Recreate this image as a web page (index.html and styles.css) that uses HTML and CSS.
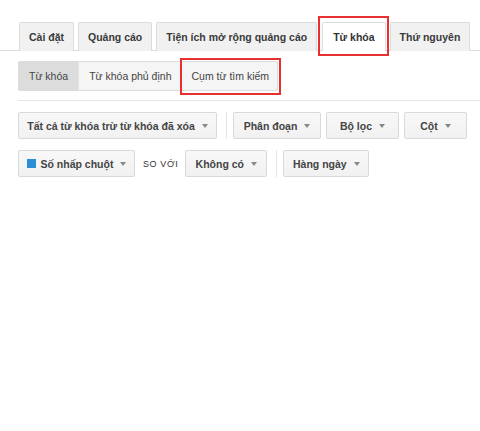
FILE: index.html
```html
<!DOCTYPE html>
<html lang="vi">
<head>
<meta charset="utf-8">
<link rel="stylesheet" href="styles.css">
</head>
<body>
<div class="tabs">
  <div class="tab">Cài đặt</div>
  <div class="tab">Quảng cáo</div>
  <div class="tab">Tiện ích mở rộng quảng cáo</div>
  <div class="tab active marked">Từ khóa</div>
  <div class="tab">Thứ nguyên</div>
</div>
<div class="content">
  <div class="subtabs">
    <div class="subtab selected">Từ khóa</div>
    <div class="subtab">Từ khóa phủ định</div>
    <div class="subtab last marked2">Cụm từ tìm kiếm</div>
  </div>
  <div class="rule"></div>
  <div class="toolbar">
    <div class="btn w-all">Tất cả từ khóa trừ từ khóa đã xóa <span class="caret"></span></div>
    <div class="vsep"></div>
    <div class="btn w-seg">Phân đoạn <span class="caret"></span></div>
    <div class="btn w-filter">Bộ lọc <span class="caret"></span></div>
    <div class="btn w-col">Cột <span class="caret"></span></div>
  </div>
  <div class="toolbar">
    <div class="btn w-metric"><span class="swatch"></span>Số nhấp chuột <span class="caret"></span></div>
    <span class="vs">so với</span>
    <div class="btn w-none">Không có <span class="caret"></span></div>
    <div class="vsep"></div>
    <div class="btn w-day">Hàng ngày <span class="caret"></span></div>
  </div>
</div>
</body>
</html>
```
FILE: styles.css
```css
* { box-sizing: border-box; }
body {
  margin: 0;
  background: #fff;
  font-family: "Liberation Sans", Arial, sans-serif;
  font-size: 10.5px;
  color: #444;
}
.tabs {
  display: flex;
  align-items: flex-end;
  gap: 4px;
  padding: 22px 0 0 19px;
  border-bottom: 1px solid #dcdcdc;
  height: 51px;
}
.tab {
  position: relative;
  flex-shrink: 0;
  white-space: nowrap;
  height: 29px;
  padding: 0 9px;
  display: flex;
  align-items: center;
  justify-content: center;
  font-weight: bold;
  color: #3a3a3a;
  background: #f1f1f1;
  border: 1px solid #dcdcdc;
  border-bottom: none;
  border-radius: 2px 2px 0 0;
  margin-bottom: -1px;
}
.tab.active {
  background: #fff;
  color: #333;
  padding: 0 10px;
  margin-left: 1px;
}
.marked::after {
  content: "";
  position: absolute;
  left: -5px;
  right: -4px;
  top: -7px;
  bottom: -5px;
  border: 2px solid #e8312f;
}
.content {
  padding-left: 18px;
}
.subtabs {
  display: flex;
  margin-top: 10px;
  height: 30px;
  width: max-content;
  border: 1px solid #dcdcdc;
  border-radius: 2px;
  background: #f5f5f5;
}
.subtab {
  position: relative;
  display: flex;
  align-items: center;
  white-space: nowrap;
  padding: 0 10px;
  color: #444;
  border-left: 1px solid #e3e3e3;
}
.subtab.last { padding: 0 8px 0 9px; }
.subtab:first-child { border-left: none; }
.subtab.selected {
  background: #dcdcdc;
}
.marked2::after {
  content: "";
  position: absolute;
  left: -2px;
  right: -4px;
  top: -4px;
  bottom: -5px;
  border: 2px solid #e8312f;
}
.rule {
  margin-top: 9px;
  height: 1px;
  background: #e5e5e5;
}
.toolbar {
  display: flex;
  align-items: center;
  margin-top: 11px;
  height: 27px;
}
.btn {
  height: 27px;
  flex-shrink: 0;
  display: flex;
  align-items: center;
  justify-content: center;
  gap: 7px;
  font-weight: bold;
  color: #444;
  background: linear-gradient(#f8f8f8, #f1f1f1);
  border: 1px solid #d9d9d9;
  border-radius: 2px;
  margin-right: 5px;
  white-space: nowrap;
}
.caret {
  width: 0;
  height: 0;
  border-left: 3.5px solid transparent;
  border-right: 3.5px solid transparent;
  border-top: 4px solid #888;
  margin-top: 1px;
}
.swatch {
  width: 9px;
  height: 9px;
  background: #2d8ed4;
  margin-right: -2px;
}
.w-all { width: 199px; }
.w-seg { width: 88px; }
.w-filter { width: 73px; }
.w-col { width: 63px; }
.w-metric { width: 117px; }
.w-none { width: 82px; }
.w-day { width: 86px; }
.vsep {
  width: 1px;
  height: 27px;
  background: #e5e5e5;
  margin: 0 6px 0 4px;
}
.vs {
  color: #333;
  font-size: 9px;
  letter-spacing: 0.6px;
  text-transform: uppercase;
  margin: 1px 7px 0 3px;
}
```
